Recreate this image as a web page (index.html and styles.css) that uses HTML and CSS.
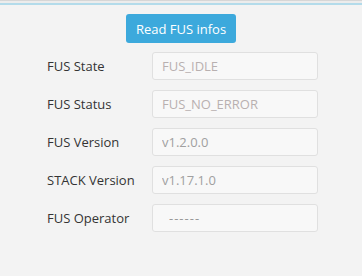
FILE: index.html
```html
<html>

<head>
    <title>FUS infos</title>
    <link rel="stylesheet" href="styles.css">
</head>

<body>
    <div class="topline"></div>
    <div class="panel">
        <button class="read-btn" type="button">Read FUS infos</button>
        <div class="fields">
            <label for="state">FUS State</label>
            <input type="text" id="state" class="light" placeholder="FUS_IDLE" readonly>

            <label for="status">FUS Status</label>
            <input type="text" id="status" class="light" placeholder="FUS_NO_ERROR" readonly>

            <label for="version">FUS Version</label>
            <input type="text" id="version" value="v1.2.0.0" readonly>

            <label for="stack">STACK Version</label>
            <input type="text" id="stack" value="v1.17.1.0" readonly>

            <label for="operator">FUS Operator</label>
            <input type="text" id="operator" class="dashes" value="------" readonly>
        </div>
    </div>
</body>

</html>
```

FILE: styles.css
```css
body {
    margin: 0;
    background-color: #f3f3f3;
    font-family: "Open Sans", "Noto Sans", sans-serif;
}

.topline {
    height: 2px;
    border-top: 1px solid #d6d6d6;
    border-bottom: 2px solid #b3dbea;
    background-color: #ececec;
}

.panel {
    display: flex;
    flex-direction: column;
    align-items: center;
    padding-top: 9px;
}

.read-btn {
    width: 110px;
    height: 29px;
    background-color: #3ca9dc;
    color: #ffffff;
    border: none;
    border-radius: 3px;
    font-family: inherit;
    font-size: 13px;
    padding: 0;
    cursor: pointer;
}

.fields {
    display: grid;
    grid-template-columns: 105px 166px;
    row-gap: 10px;
    align-items: center;
    margin-top: 9px;
    margin-left: 3px;
}

label {
    font-size: 13px;
    color: #333333;
}

input[type=text] {
    height: 28px;
    box-sizing: border-box;
    border: 1px solid #e0e0e0;
    border-radius: 3px;
    background-color: #f8f8f8;
    padding: 0 9px;
    font-family: inherit;
    font-size: 13px;
    color: #a0a0a0;
    outline: none;
}

input.light::placeholder {
    color: #b8b0b0;
}

input.dashes {
    padding-left: 16px;
    letter-spacing: 1px;
    color: #999999;
}
```
